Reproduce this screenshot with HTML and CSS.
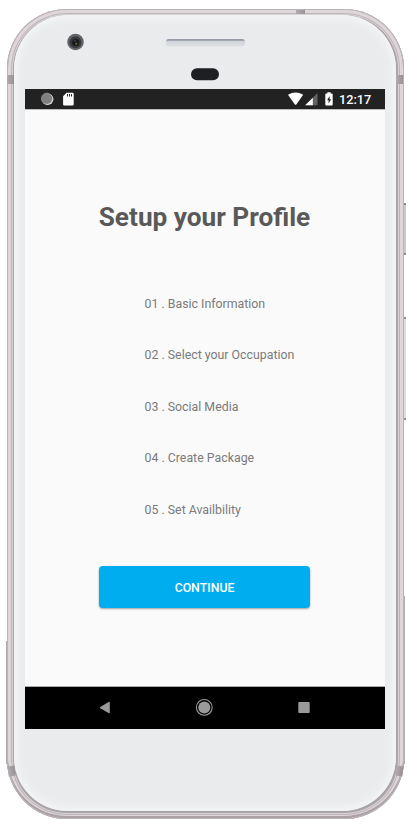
FILE: index.html
```html
<!DOCTYPE html>
<html lang="en">
<head>
<meta charset="utf-8">
<title>Setup your Profile</title>
<link rel="stylesheet" href="styles.css">
</head>
<body>
<div class="phone">
  <i class="side-edge"></i>
  <i class="key power"></i>
  <i class="key volume"></i>
  <i class="band band-top"></i>
  <i class="band band-tl"></i>
  <i class="band band-tr"></i>
  <i class="band band-bl"></i>
  <i class="band band-br"></i>
  <div class="face">
    <div class="forehead">
      <svg class="hardware" width="360" height="74" viewBox="25 15 360 74">
        <defs>
          <linearGradient id="ear" x1="0" y1="0" x2="0" y2="1">
            <stop offset="0" stop-color="#8f939f"/><stop offset=".22" stop-color="#a6aab5"/><stop offset=".34" stop-color="#d2d5da"/><stop offset="1" stop-color="#dfe1e4"/>
          </linearGradient>
        </defs>
        <circle cx="75.5" cy="42" r="8.3" fill="#626469"/>
        <circle cx="75.5" cy="42.2" r="6" fill="#38393d"/>
        <circle cx="75.7" cy="42.5" r="3.6" fill="#18191d"/>
        <circle cx="76.3" cy="43.7" r="1" fill="#70703a"/>
        <circle cx="75" cy="40.7" r=".8" fill="#4d4e65"/>
        <rect x="166" y="39" width="79" height="7.5" rx="3" fill="url(#ear)"/>
        <rect x="191" y="68.2" width="28" height="12" rx="6" fill="#1d1f23"/>
      </svg>
    </div>
    <div class="screen">
      <header class="status">
        <svg class="status-left" width="40" height="20" viewBox="37 89 40 20">
          <circle cx="47.6" cy="99.2" r="5.800" fill="#e4e4e4"/>
          <circle cx="46.800" cy="98.600" r="5.500" fill="#808080"/>
          <circle cx="46.800" cy="98.600" r="5.500" fill="none" stroke="#aaa" stroke-width=".8" stroke-dasharray="1 1"/>
          <path d="M66.500 92.700h6.200q1 0 1 1v10.500q0 1.200-1 1.200h-8.600q-1 0-1-1V96.200z" fill="#fff"/>
          <path d="M67.500 94.100v2.400M69.500 94.100v2.400M71.500 94.100v2.400" stroke="#222" stroke-width="1"/>
        </svg>
        <div class="status-right">
          <svg width="48" height="20" viewBox="287 89 48 20">
            <path d="M288 94.800Q295.600 90 303.200 94.800L296.500 104.300Q295.600 105.300 294.700 104.300Z" fill="#fff"/>
            <path d="M317.500 93v12.300h-12.300z" fill="#636363"/>
            <path d="M312.800 97.700v7.600h-7.600z" fill="#fff"/>
            <path d="M327.400 92.300h3.200v1.300h1.100q1 0 1 1v9.800q0 1-1 1h-5.400q-1 0-1-1v-9.800q0-1 1-1h1.100z" fill="#fff"/>
            <path d="M329.600 96l-2.500 4.200h1.500v3.400l2.500-4.300h-1.500z" fill="#222"/>
          </svg>
          <span class="clock">12:17</span>
        </div>
      </header>
      <main class="content">
        <h1>Setup your Profile</h1>
        <ul class="steps">
          <li>01 . Basic Information</li>
          <li>02 . Select your Occupation</li>
          <li>03 . Social Media</li>
          <li>04 . Create Package</li>
          <li>05 . Set Availbility</li>
        </ul>
        <button class="continue" type="button">CONTINUE</button>
      </main>
      <nav class="navbar">
        <svg width="360" height="42" viewBox="25 687 360 42">
          <path d="M109.800 702v10.800q0 .6-.7.400l-8.900-5q-.9-.7 0-1.300l8.900-5.100q.7-.3.700.2z" fill="#9a9a9a"/>
          <circle cx="204.300" cy="707.400" r="7.900" fill="none" stroke="#9a9a9a" stroke-width="1.100"/>
          <circle cx="204.300" cy="707.400" r="6" fill="#9a9a9a"/>
          <rect x="298.300" y="702" width="11.400" height="11" rx=".8" fill="#9a9a9a"/>
        </svg>
      </nav>
    </div>
  </div>
</div>
</body>
</html>
```
FILE: styles.css
```css
* {
  box-sizing: border-box;
}

body {
  margin: 0;
  padding: 9px 0 0 7px;
  height: 828px;
  overflow: hidden;
  background: #fff;
  font-family: Roboto, "Noto Sans", sans-serif;
}

.phone {
  position: relative;
  width: 397px;
  height: 810px;
  padding: 6px 8px 8px 7px;
  border-radius: 60px;
  background: #aaa3a7;
  box-shadow:
    inset 0 0 0 1px #bbb4b7,
    inset 0 -2px 0 1px #aaa0a5,
    inset 0 0 0 4px #ded6d9,
    inset 0 0 0 5px #bcb4b8,
    inset 0 0 0 6px #d9d3d6;
}

.side-edge {
  position: absolute;
  top: 632px;
  left: -1px;
  right: -1px;
  height: 123px;
  border: solid #b0acae;
  border-width: 0 1px;
}

.side-edge::before {
  content: "";
  position: absolute;
  top: -45px;
  right: -1px;
  width: 1px;
  height: 45px;
  background: #b0acae;
}

.key {
  position: absolute;
  left: 397px;
  width: 2px;
  background: #c6caca;
  border: solid #8c8e8c;
  border-width: 2px 0;
}

.power {
  top: 194px;
  height: 52px;
}

.volume {
  top: 308px;
  height: 103px;
  background: #dedfd9;
}

.band {
  position: absolute;
  width: 7px;
  height: 9px;
  background: linear-gradient(90deg, #b3abaf, #979094);
}

.band-top {
  top: 1px;
  left: 289px;
  width: 9px;
  height: 4px;
}

.band-tl {
  top: 66px;
  left: 0;
}

.band-tr {
  top: 66px;
  right: 1px;
}

.band-bl {
  top: 757px;
  left: 1px;
  height: 10px;
  transform: rotate(-8deg);
}

.band-br {
  top: 757px;
  right: 1px;
  height: 10px;
  transform: rotate(8deg);
}

.face {
  position: relative;
  height: 796px;
  padding: 0 11px;
  border-radius: 54px;
  background: #e9ebed;
  box-shadow: inset 0 0 8px 3px #f5f6f8;
}

.forehead {
  height: 74px;
}

.hardware,
.status svg,
.navbar svg {
  display: block;
}

.screen {
  display: flex;
  flex-direction: column;
  width: 360px;
  height: 640px;
  background: #fafafa;
}

.status {
  display: flex;
  justify-content: space-between;
  height: 21px;
  padding: 0 14px 0 12px;
  background: #222;
  border-bottom: 1px solid #bcbcbc;
}

.status-right {
  display: flex;
  gap: 4px;
}

.clock {
  width: 32px;
  color: #fff;
  font-size: 12.700px;
  font-weight: 500;
  line-height: 21px;
}

.content {
  flex: 1;
  display: flex;
  flex-direction: column;
  align-items: center;
  padding: 91px 1px 0 0;
}

h1 {
  margin: 0;
  color: #595959;
  font-size: 26.200px;
  font-weight: 700;
  line-height: 32px;
  white-space: nowrap;
}

.steps {
  display: grid;
  gap: 35.500px;
  width: 150px;
  margin: 62.500px 0 0 30px;
  padding: 0;
  list-style: none;
  color: #7a7a7a;
  font-size: 12.350px;
  line-height: 16px;
  white-space: nowrap;
}

.continue {
  width: 211px;
  height: 42px;
  margin: 48.500px 0 0;
  padding: 1px 0 0;
  border: 0;
  border-radius: 4px;
  background: #00aeef;
  box-shadow: 0 1px 2px rgba(0, 0, 0, .36);
  color: #fff;
  font-family: inherit;
  font-size: 12.300px;
  font-weight: 500;
}

.navbar {
  height: 43px;
  border-top: 1px solid #a9aba9;
  background: #000;
}
```
